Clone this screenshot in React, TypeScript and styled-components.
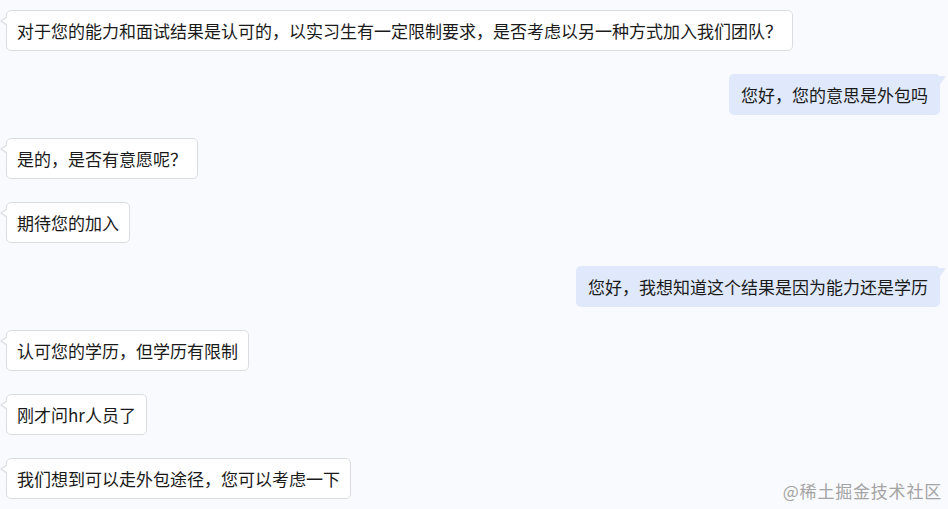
import React from "react";
import styled, { createGlobalStyle, css } from "styled-components";

const Global = createGlobalStyle`
  html, body { margin: 0; padding: 0; }
  body {
    background: #f9fafe;
    font-family: "Microsoft YaHei", "Noto Sans CJK SC", "Noto Sans", sans-serif;
    color: #1a1a1a;
  }
`;

const Page = styled.div`
  position: relative;
  width: 948px;
  height: 509px;
  overflow: hidden;
  box-sizing: border-box;
  padding: 10px 8px 0 6px;
  display: flex;
  flex-direction: column;
  gap: 23px;
`;

const Row = styled.div<{ $mine?: boolean }>`
  display: flex;
  justify-content: ${(p) => (p.$mine ? "flex-end" : "flex-start")};
`;

const Bubble = styled.div<{ $mine?: boolean }>`
  position: relative;
  box-sizing: border-box;
  height: 41px;
  font-size: 17px;
  line-height: 21px;
  white-space: nowrap;
  border-radius: 5px;
  ${(p) =>
    p.$mine
      ? css`
          background: #e0e9fb;
          padding: 10px 12px;
          &::after {
            content: "";
            position: absolute;
            top: 2px;
            right: -6px;
            border-style: solid;
            border-width: 0 0 10px 7px;
            border-color: transparent transparent transparent #e0e9fb;
          }
        `
      : css`
          background: #ffffff;
          border: 1px solid #dcdde0;
          padding: 9px 10px;
          &::before {
            content: "";
            position: absolute;
            top: 5px;
            left: -7px;
            border-style: solid;
            border-width: 5px 7px 5px 0;
            border-color: transparent #dcdde0 transparent transparent;
          }
          &::after {
            content: "";
            position: absolute;
            top: 6px;
            left: -5px;
            border-style: solid;
            border-width: 4px 6px 4px 0;
            border-color: transparent #ffffff transparent transparent;
          }
        `}
`;

const Watermark = styled.div`
  position: absolute;
  right: 6px;
  bottom: 8px;
  font-size: 17px;
  line-height: 21px;
  letter-spacing: 0.8px;
  color: #a4a4a4;
  font-family: "Noto Sans CJK SC", sans-serif;
`;

const messages: { mine?: boolean; text: string }[] = [
  { text: "对于您的能力和面试结果是认可的，以实习生有一定限制要求，是否考虑以另一种方式加入我们团队？" },
  { mine: true, text: "您好，您的意思是外包吗" },
  { text: "是的，是否有意愿呢？" },
  { text: "期待您的加入" },
  { mine: true, text: "您好，我想知道这个结果是因为能力还是学历" },
  { text: "认可您的学历，但学历有限制" },
  { text: "刚才问hr人员了" },
  { text: "我们想到可以走外包途径，您可以考虑一下" },
];

export default function App() {
  return (
    <>
      <Global />
      <Page>
        {messages.map((m, i) => (
          <Row key={i} $mine={m.mine}>
            <Bubble $mine={m.mine}>{m.text}</Bubble>
          </Row>
        ))}
        <Watermark>@稀土掘金技术社区</Watermark>
      </Page>
    </>
  );
}
